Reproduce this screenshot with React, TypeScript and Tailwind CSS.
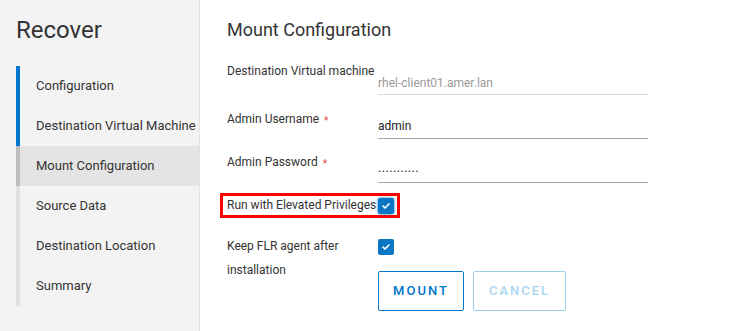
import React from "react";

const STEPS = [
  { label: "Configuration", state: "done" },
  { label: "Destination Virtual Machine", state: "done" },
  { label: "Mount Configuration", state: "active" },
  { label: "Source Data", state: "todo" },
  { label: "Destination Location", state: "todo" },
  { label: "Summary", state: "todo" },
];

function Check() {
  return (
    <span className="flex h-[16px] w-[16px] shrink-0 items-center justify-center rounded-[2px] bg-[#0a76c4]">
      <svg viewBox="0 0 12 12" className="h-[10px] w-[10px]" fill="none" stroke="white" strokeWidth={2} strokeLinecap="round" strokeLinejoin="round">
        <path d="M2.5 6.2l2.3 2.2 4.7-4.8" />
      </svg>
    </span>
  );
}

function Required() {
  return <span className="ml-[5px] mt-[4px] text-[10px] text-[#e0463a]">*</span>;
}

export default function App() {
  return (
    <div className="flex h-[331px] w-[732px] bg-white font-['Roboto',sans-serif] text-[13px] text-[#333]">
      {/* Sidebar */}
      <aside className="w-[200px] shrink-0 border-r border-[#e2e2e2] bg-[#f3f3f3]">
        <h1 className="pl-4 pt-[14px] text-[24px] leading-[32px] text-[#333]">Recover</h1>
        <ul className="mt-[20px] pl-4">
          {STEPS.map(({ label, state }) => (
            <li
              key={label}
              className={`flex h-[40px] items-center border-l-4 pl-4 ${
                state === "done"
                  ? "border-[#0076ce]"
                  : state === "active"
                  ? "border-[#bdbdbd] bg-[#e4e4e4]"
                  : "border-[#e0e0e0]"
              }`}
            >
              {label}
            </li>
          ))}
        </ul>
      </aside>

      {/* Main */}
      <main className="flex-1 pl-[27px] pt-[18px] text-[12px]">
        <h2 className="text-[18px] leading-[24px] text-[#333]">Mount Configuration</h2>

        <div className="mt-[19px] flex items-start">
          <div className="w-[151px] whitespace-nowrap leading-[20px]">Destination Virtual machine</div>
          <div className="mt-[10px] flex h-[24px] w-[270px] items-center border-b border-[#dcdcdc] text-[#9a9a9a]">
            rhel-client01.amer.lan
          </div>
        </div>

        <div className="mt-[14px] flex items-start">
          <div className="flex h-[20px] w-[151px] items-center leading-[20px]">
            Admin Username
            <Required />
          </div>
          <div className="mt-[5px] flex h-[25px] w-[270px] items-center border-b border-[#a8a8a8] text-[#222]">
            admin
          </div>
        </div>

        <div className="mt-[13px] flex items-start">
          <div className="flex h-[20px] w-[151px] items-center leading-[20px]">
            Admin Password
            <Required />
          </div>
          <div className="mt-[6px] flex h-[25px] w-[270px] items-center border-b border-[#a8a8a8] pb-[5px] text-[13px] tracking-[0.3px] text-[#222]">
            ...........
          </div>
        </div>

        <div className="ml-[-7px] mt-[10px] flex w-[180px] items-center border-[3px] border-[#ff0000] py-[1px] pl-[4px] pr-[3px]">
          <div className="w-[151px] whitespace-nowrap leading-[17px]">Run with Elevated Privileges</div>
          <span className="rounded-[3px] shadow-[0_0_2px_1px_rgba(10,118,196,0.5)]">
            <Check />
          </span>
        </div>

        <div className="mt-[16px] flex items-start">
          <div className="w-[151px] leading-[24px]">Keep FLR agent after installation</div>
          <div className="flex flex-col">
            <div className="mt-[5px]">
              <Check />
            </div>
            <div className="mt-[16px] flex gap-[9px]">
              <button className="h-[40px] w-[86px] rounded-[2px] border border-[#0076ce] text-[13px] font-medium tracking-[2px] text-[#0076ce]">
                MOUNT
              </button>
              <button className="h-[40px] w-[93px] rounded-[2px] border border-[#9ccfea] text-[13px] font-medium tracking-[2px] text-[#a9d6f0]">
                CANCEL
              </button>
            </div>
          </div>
        </div>
      </main>
    </div>
  );
}
